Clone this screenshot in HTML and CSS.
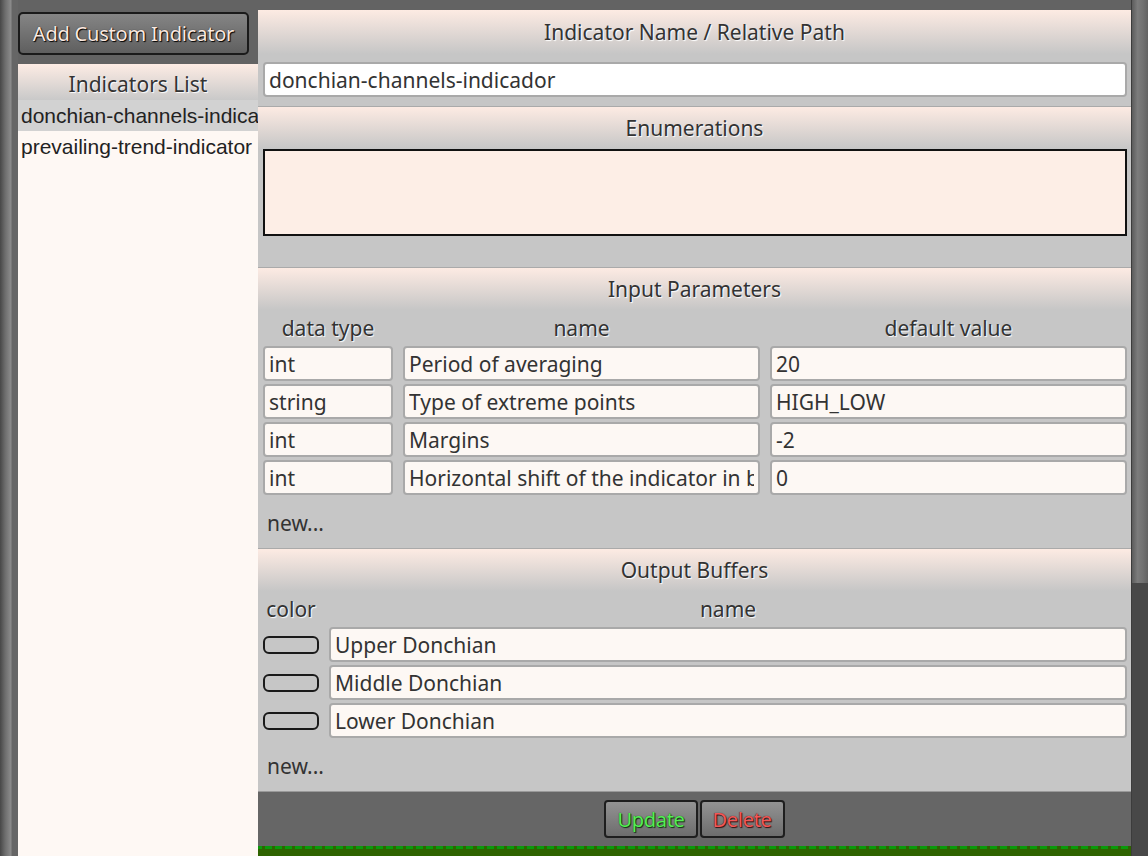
FILE: index.html
```html
<!DOCTYPE html>
<html lang="en">
<head>
    <meta charset="UTF-8">
    <meta name="viewport" content="width=device-width, initial-scale=1.0">
    <title>Custom Indicators</title>
    <link rel="stylesheet" href="styles.css">
</head>
<body>
    <div class="app">
        <div class="edge"></div>

        <aside class="sidebar">
            <button class="add-btn" type="button">Add Custom Indicator</button>
            <div class="list-panel">
                <div class="list-title">Indicators List</div>
                <ul class="ind-list">
                    <li class="selected">donchian-channels-indicador</li>
                    <li>prevailing-trend-indicator</li>
                </ul>
            </div>
        </aside>

        <main class="editor">
            <section class="sec sec-name">
                <div class="sec-title">Indicator Name / Relative Path</div>
                <input class="name-input" type="text" value="donchian-channels-indicador">
            </section>

            <section class="sec sec-enum">
                <div class="sec-title">Enumerations</div>
                <textarea class="enum-box"></textarea>
            </section>

            <section class="sec">
                <div class="sec-title">Input Parameters</div>
                <div class="params-grid labels">
                    <span>data type</span>
                    <span>name</span>
                    <span>default value</span>
                </div>
                <div class="params-grid">
                    <input class="field" type="text" value="int">
                    <input class="field" type="text" value="Period of averaging">
                    <input class="field" type="text" value="20">
                </div>
                <div class="params-grid">
                    <input class="field" type="text" value="string">
                    <input class="field" type="text" value="Type of extreme points">
                    <input class="field" type="text" value="HIGH_LOW">
                </div>
                <div class="params-grid">
                    <input class="field" type="text" value="int">
                    <input class="field" type="text" value="Margins">
                    <input class="field" type="text" value="-2">
                </div>
                <div class="params-grid">
                    <input class="field" type="text" value="int">
                    <input class="field" type="text" value="Horizontal shift of the indicator in bars">
                    <input class="field" type="text" value="0">
                </div>
                <div class="new-row">new...</div>
            </section>

            <section class="sec">
                <div class="sec-title">Output Buffers</div>
                <div class="buffers-grid labels">
                    <span>color</span>
                    <span>name</span>
                </div>
                <div class="buffers-grid">
                    <span class="swatch"></span>
                    <input class="field" type="text" value="Upper Donchian">
                </div>
                <div class="buffers-grid">
                    <span class="swatch"></span>
                    <input class="field" type="text" value="Middle Donchian">
                </div>
                <div class="buffers-grid">
                    <span class="swatch"></span>
                    <input class="field" type="text" value="Lower Donchian">
                </div>
                <div class="new-row">new...</div>
            </section>

            <div class="actions">
                <button class="act-btn update" type="button">Update</button>
                <button class="act-btn delete" type="button">Delete</button>
            </div>
            <div class="next-panel"></div>
        </main>

        <div class="scrollbar">
            <div class="thumb"></div>
        </div>
    </div>
</body>
</html>
```

FILE: styles.css
```css
html, body {
    margin: 0;
    padding: 0;
    height: 100%;
}
body {
    background-color: #636363;
    font-family: 'Noto Sans', 'Open Sans', sans-serif;
    color: #333;
    overflow: hidden;
}
.app {
    display: flex;
    height: 856px;
}

/* left edge strip */
.edge {
    width: 18px;
    flex-shrink: 0;
    background: linear-gradient(to right, #474747 0, #6c6c6c 5px, #8c8c8c 11px, #666 12px, #666 18px);
}

/* sidebar */
.sidebar {
    width: 240px;
    flex-shrink: 0;
    display: flex;
    flex-direction: column;
}
.add-btn {
    width: 231px;
    height: 43px;
    margin-top: 12px;
    padding: 0;
    border: 2px solid #1a1a1a;
    border-radius: 5px;
    background: linear-gradient(to bottom, #858585, #5f5f5f);
    color: #fbe9e0;
    font-family: 'Noto Sans', sans-serif;
    font-size: 20px;
    letter-spacing: -0.2px;
    text-shadow: 1px 1px 1px #000, 0 0 1px #222;
    cursor: pointer;
}
.list-panel {
    flex: 1;
    margin-top: 9px;
    background-color: #fef8f4;
    overflow: hidden;
}
.list-title {
    height: 36px;
    padding-top: 3px;
    box-sizing: border-box;
    line-height: 34px;
    text-align: center;
    font-size: 21px;
    color: #333;
    text-shadow: 1px 1px 1px #fff;
    background: linear-gradient(to bottom, #fdece4, #c9c9c9);
}
.ind-list {
    list-style: none;
    margin: 0;
    padding: 0;
}
.ind-list li {
    height: 31px;
    line-height: 31px;
    padding-left: 3px;
    font-family: 'Liberation Sans', Arial, sans-serif;
    font-size: 21px;
    color: #222;
    white-space: nowrap;
}
.ind-list li.selected {
    background-color: #d2d2d2;
}

/* editor panel */
.editor {
    width: 873px;
    flex-shrink: 0;
    margin-top: 10px;
    display: flex;
    flex-direction: column;
}
.sec {
    background-color: #c6c6c6;
    padding: 0 4px 0 5px;
    border-top: 1px solid #aaa;
}
.sec-name {
    border-top: none;
    padding-bottom: 9px;
}
.sec-title {
    height: 42px;
    line-height: 42px;
    margin: 0 -4px 0 -5px;
    text-align: center;
    font-size: 21px;
    color: #333;
    text-shadow: 1px 1px 1px #fff;
    background: linear-gradient(to bottom, #fdebe3, #c6c6c6);
}
.sec-name .sec-title {
    height: 44px;
    line-height: 44px;
    margin-bottom: 8px;
}
.name-input, .field {
    display: block;
    width: 100%;
    height: 35px;
    box-sizing: border-box;
    margin: 0;
    padding: 0 4px;
    border: 2px solid #a9a9a9;
    border-radius: 4px;
    font-family: 'Noto Sans', sans-serif;
    font-size: 21px;
    color: #333;
    outline: none;
}
.name-input {
    background-color: #fff;
}
.field {
    background-color: #fdf8f4;
}
.sec-enum {
    padding-bottom: 31px;
}
.enum-box {
    display: block;
    width: 100%;
    height: 87px;
    box-sizing: border-box;
    margin: 0;
    border: 2px solid #111;
    background-color: #fdeee6;
    resize: none;
    outline: none;
}

/* rows */
.params-grid {
    display: grid;
    grid-template-columns: 130px 1fr 1fr;
    column-gap: 10px;
    margin-bottom: 3px;
}
.buffers-grid {
    display: grid;
    grid-template-columns: 56px 1fr;
    column-gap: 10px;
    align-items: center;
    margin-bottom: 3px;
}
.labels {
    height: 36px;
    line-height: 36px;
    margin-bottom: 0;
    font-size: 21px;
    text-align: center;
    text-shadow: 1px 1px 1px #fff;
}
.swatch {
    display: block;
    height: 18px;
    box-sizing: border-box;
    border: 2px solid #1a1a1a;
    border-radius: 6px;
    margin-top: 1px;
}
.new-row {
    height: 50px;
    line-height: 50px;
    padding-left: 4px;
    font-size: 21px;
    color: #333;
}

/* bottom bar */
.actions {
    height: 54px;
    border-top: 1px solid #999;
    background-color: #666;
    display: flex;
    justify-content: center;
    align-items: center;
    gap: 2px;
}
.act-btn {
    height: 38px;
    padding: 0 11px;
    border: 2px solid #1e1e1e;
    border-radius: 4px;
    background: linear-gradient(to bottom, #939393, #6d6d6d);
    font-family: 'Noto Sans', sans-serif;
    font-size: 20px;
    letter-spacing: -0.3px;
    cursor: pointer;
}
.update {
    color: #55ee55;
    text-shadow: 1px 1px 1px #0f300f, 0 0 1px #163d16;
}
.delete {
    color: #f25757;
    text-shadow: 1px 1px 1px #300f0f, 0 0 1px #3d1616;
}
.next-panel {
    flex: 1;
    background-color: #2f6300;
    border-top: 3px solid transparent;
    border-image: repeating-linear-gradient(to right, #0a9a0a 0, #0a9a0a 7px, #2f6300 7px, #2f6300 10px) 3;
}

/* scrollbar */
.scrollbar {
    width: 17px;
    flex-shrink: 0;
    background-color: #484848;
    border-left: 1px solid #3c3c3c;
    box-sizing: border-box;
}
.thumb {
    height: 583px;
    background: linear-gradient(to right, #5c5c5c, #7c7c7c 35%, #707070 70%, #626262);
}
```
